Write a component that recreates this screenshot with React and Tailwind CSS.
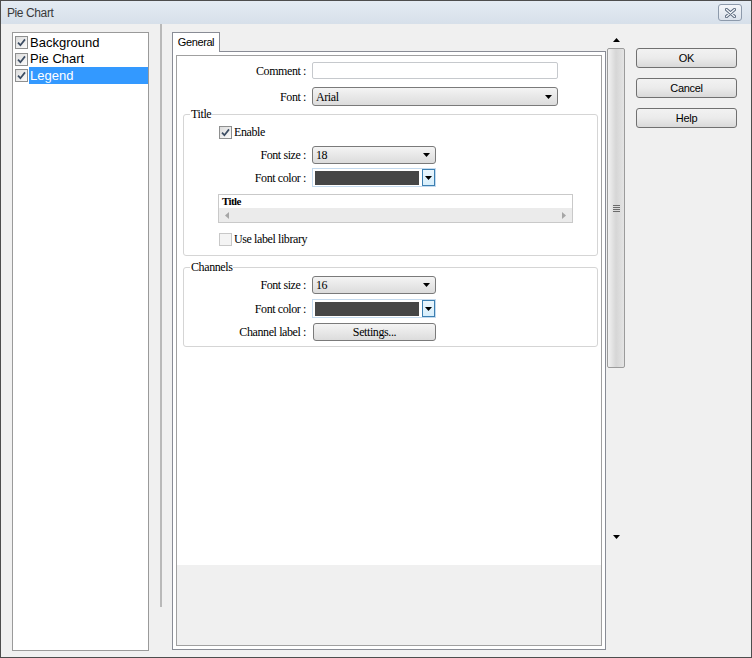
import React from 'react';

const serif = "font-['Liberation_Serif',serif] text-[12px] tracking-[-0.4px] text-black";
const sans = "font-['Liberation_Sans',Arial,sans-serif]";

const treeItems = [
  { label: 'Background', row: 'h-[17px]' },
  { label: 'Pie Chart', row: 'h-[16px]' },
  { label: 'Legend', row: 'h-[17px]', selected: true },
];

function Arrow({ dir = 'down', color = '#000' }) {
  if (dir === 'up') {
    return (
      <svg width="7" height="4" viewBox="0 0 7 4">
        <path d="M3.5 0L7 4H0z" fill={color} />
      </svg>
    );
  }
  if (dir === 'left') {
    return (
      <svg width="4" height="7" viewBox="0 0 4 7">
        <path d="M0 3.5L4 0v7z" fill={color} />
      </svg>
    );
  }
  if (dir === 'right') {
    return (
      <svg width="4" height="7" viewBox="0 0 4 7">
        <path d="M4 3.5L0 0v7z" fill={color} />
      </svg>
    );
  }
  return (
    <svg width="7" height="4" viewBox="0 0 7 4">
      <path d="M0 0h7L3.5 4z" fill={color} />
    </svg>
  );
}

function CheckBox({ checked, disabled }) {
  return (
    <span
      className={`flex h-[13px] w-[13px] shrink-0 items-center justify-center border ${
        disabled
          ? 'border-[#c8c8c8] bg-[#f4f4f4]'
          : 'border-[#8e8f8f] bg-linear-to-br from-[#dcdcdc] to-[#fbfbfb]'
      }`}
    >
      {checked && (
        <svg width="9" height="9" viewBox="0 0 9 9">
          <path d="M1 4.6L3.4 7.2L8 1.4" fill="none" stroke="#3c4d63" strokeWidth="1.7" />
        </svg>
      )}
    </span>
  );
}

function Combo({ value, wide }) {
  return (
    <div
      className={`flex items-center justify-between rounded-[3px] border border-[#7a7a7a] bg-linear-to-b from-[#f4f4f4] to-[#dcdcdc] pl-[3px] pr-[5px] ${
        wide ? 'h-[19px] w-[246px]' : 'h-[18px] w-[124px]'
      }`}
    >
      <span className={`${serif} leading-[14px]`}>{value}</span>
      <Arrow />
    </div>
  );
}

function ColorCombo() {
  return (
    <div className="flex h-[19px] w-[124px] items-center border border-[#c4daee] bg-white pl-[2px]">
      <div className="h-[14px] w-[105px] bg-[#464646]" />
      <div className="ml-[3px] flex h-[17px] w-[13px] items-center justify-center border border-[#3c7fb1] bg-linear-to-b from-[#eaf6fd] to-[#d7eefb]">
        <Arrow />
      </div>
    </div>
  );
}

function Row({ label, labelW, className = '', children }) {
  return (
    <div className={`flex items-center ${className}`}>
      <span className={`${serif} ${labelW} pr-[6px] text-right leading-[14px]`}>{label}</span>
      {children}
    </div>
  );
}

function Btn({ children }) {
  return (
    <button
      type="button"
      className="flex h-[20px] w-[101px] items-center justify-center rounded-[3px] border border-[#707070] bg-linear-to-b from-[#f2f2f2] via-[#ebebeb] to-[#d9d9d9] text-[11px] tracking-[-0.3px] text-black"
    >
      {children}
    </button>
  );
}

function CloseButton() {
  return (
    <div className="flex h-[17px] w-[24px] items-center justify-center rounded-[3px] border border-[#8d9aab] bg-linear-to-b from-[#f5f7fa] to-[#dbe2eb]">
      <svg width="11" height="10" viewBox="0 0 11 10">
        <path d="M1.5 1.5L9.5 8.5M9.5 1.5L1.5 8.5" stroke="#59687c" strokeWidth="3.2" strokeLinecap="round" />
        <path d="M1.5 1.5L9.5 8.5M9.5 1.5L1.5 8.5" stroke="#f4f6f9" strokeWidth="1.3" strokeLinecap="round" />
      </svg>
    </div>
  );
}

export default function App() {
  return (
    <div className={`${sans} flex h-[658px] w-[752px] flex-col overflow-hidden border border-[#4d4d4d] bg-[#f0f0f0] text-black`}>
      {/* title bar */}
      <div className="flex h-[23px] shrink-0 items-center justify-between bg-linear-to-b from-[#e4ebf3] to-[#d7e0ea] pl-[6px] pr-[9px]">
        <span className="text-[12px] tracking-[-0.4px] text-[#3a3a3a]">Pie Chart</span>
        <CloseButton />
      </div>

      <div className="flex flex-1">
        {/* item list */}
        <div className="ml-[11px] mt-[8px] h-[619px] w-[137px] border border-[#9a9a9a] bg-white pt-[1px]">
          {treeItems.map((it) => (
            <div key={it.label} className={`flex items-center pl-[2px] ${it.row}`}>
              <CheckBox checked />
              <span
                className={`ml-[1px] flex h-full flex-1 items-center pl-[1px] text-[13px] ${
                  it.selected ? 'bg-[#3399ff] text-white' : 'text-black'
                }`}
              >
                {it.label}
              </span>
            </div>
          ))}
        </div>

        {/* splitter */}
        <div className="ml-[11px] h-[583px] w-[2px] bg-[#b9b9b9]" />

        {/* tab control */}
        <div className="ml-[10px] mt-[8px] flex w-[434px] flex-col">
          <div className="flex">
            <div className="relative z-10 -mb-px flex h-[20px] w-[48px] items-center justify-center border border-b-0 border-[#898c95] bg-white text-[11px] tracking-[-0.4px]">
              General
            </div>
          </div>
          <div className="h-[599px] border border-[#898c95] bg-white p-[3px]">
            <div className="flex h-full flex-col border border-[#a0a0a0]">
              <div className="h-[509px] bg-white pt-[6px]">
                <Row label="Comment :" labelW="w-[135px]">
                  <div className="h-[17px] w-[246px] rounded-[2px] border border-[#c6c9cd] bg-white" />
                </Row>
                <Row label="Font :" labelW="w-[135px]" className="mt-[8px]">
                  <Combo value="Arial" wide />
                </Row>

                <fieldset className="ml-[6px] mt-[1px] w-[415px] rounded-[3px] border border-[#d5d5d5] pb-[9px]">
                  <legend className={`${serif} ml-[6px] px-[1px] leading-[14px]`}>Title</legend>
                  <div className="mt-[5px] flex items-center pl-[35px]">
                    <CheckBox checked />
                    <span className={`${serif} ml-[2px] leading-[13px]`}>Enable</span>
                  </div>
                  <Row label="Font size :" labelW="w-[128px]" className="mt-[7px]">
                    <Combo value="18" />
                  </Row>
                  <Row label="Font color :" labelW="w-[128px]" className="mt-[4px]">
                    <ColorCombo />
                  </Row>
                  <div className="ml-[34px] mt-[7px] flex h-[29px] w-[355px] flex-col border border-[#c9c9c9] bg-white">
                    <div className="h-[13px] pl-[3px] font-['Liberation_Serif',serif] text-[11px] font-bold leading-[13px] tracking-[-0.6px]">
                      Title
                    </div>
                    <div className="flex h-[14px] items-center justify-between bg-[#ebebeb] px-[6px]">
                      <Arrow dir="left" color="#a6a6a6" />
                      <Arrow dir="right" color="#a6a6a6" />
                    </div>
                  </div>
                  <div className="mt-[10px] flex items-center pl-[35px]">
                    <CheckBox disabled />
                    <span className={`${serif} ml-[2px] leading-[13px] text-[#a3a3a3]`}>Use label library</span>
                  </div>
                </fieldset>

                <fieldset className="ml-[6px] mt-[4px] w-[415px] rounded-[3px] border border-[#d5d5d5] pb-[5px]">
                  <legend className={`${serif} ml-[6px] px-[1px] leading-[14px]`}>Channels</legend>
                  <Row label="Font size :" labelW="w-[128px]" className="mt-[2px]">
                    <Combo value="16" />
                  </Row>
                  <Row label="Font color :" labelW="w-[128px]" className="mt-[5px]">
                    <ColorCombo />
                  </Row>
                  <Row label="Channel label :" labelW="w-[128px]" className="mt-[5px]">
                    <button
                      type="button"
                      className={`${serif} ml-[1px] flex h-[18px] w-[123px] items-center justify-center rounded-[3px] border border-[#7a7a7a] bg-linear-to-b from-[#f4f4f4] to-[#dcdcdc] leading-[14px]`}
                    >
                      Settings...
                    </button>
                  </Row>
                </fieldset>
              </div>
              <div className="flex-1 bg-[#f0f0f0]" />
            </div>
          </div>
        </div>

        {/* vertical scrollbar */}
        <div className="mt-[8px] flex w-[20px] flex-col items-center">
          <div className="flex h-[16px] w-full items-center justify-center">
            <Arrow dir="up" />
          </div>
          <div className="flex h-[320px] w-[18px] items-center justify-center rounded-[2px] border border-[#9b9b9b] bg-linear-to-r from-[#f2f2f2] via-[#d6d6d6] to-[#e4e4e4]">
            <div className="flex flex-col gap-[1px]">
              <div className="h-px w-[7px] bg-[#6b6b6b]" />
              <div className="h-px w-[7px] bg-[#6b6b6b]" />
              <div className="h-px w-[7px] bg-[#6b6b6b]" />
              <div className="h-px w-[7px] bg-[#6b6b6b]" />
            </div>
          </div>
          <div className="h-[161px]" />
          <div className="flex h-[16px] w-full items-center justify-center">
            <Arrow />
          </div>
        </div>

        {/* dialog buttons */}
        <div className="ml-[10px] mt-[24px] flex flex-col gap-[10px]">
          <Btn>OK</Btn>
          <Btn>Cancel</Btn>
          <Btn>Help</Btn>
        </div>
      </div>
    </div>
  );
}
